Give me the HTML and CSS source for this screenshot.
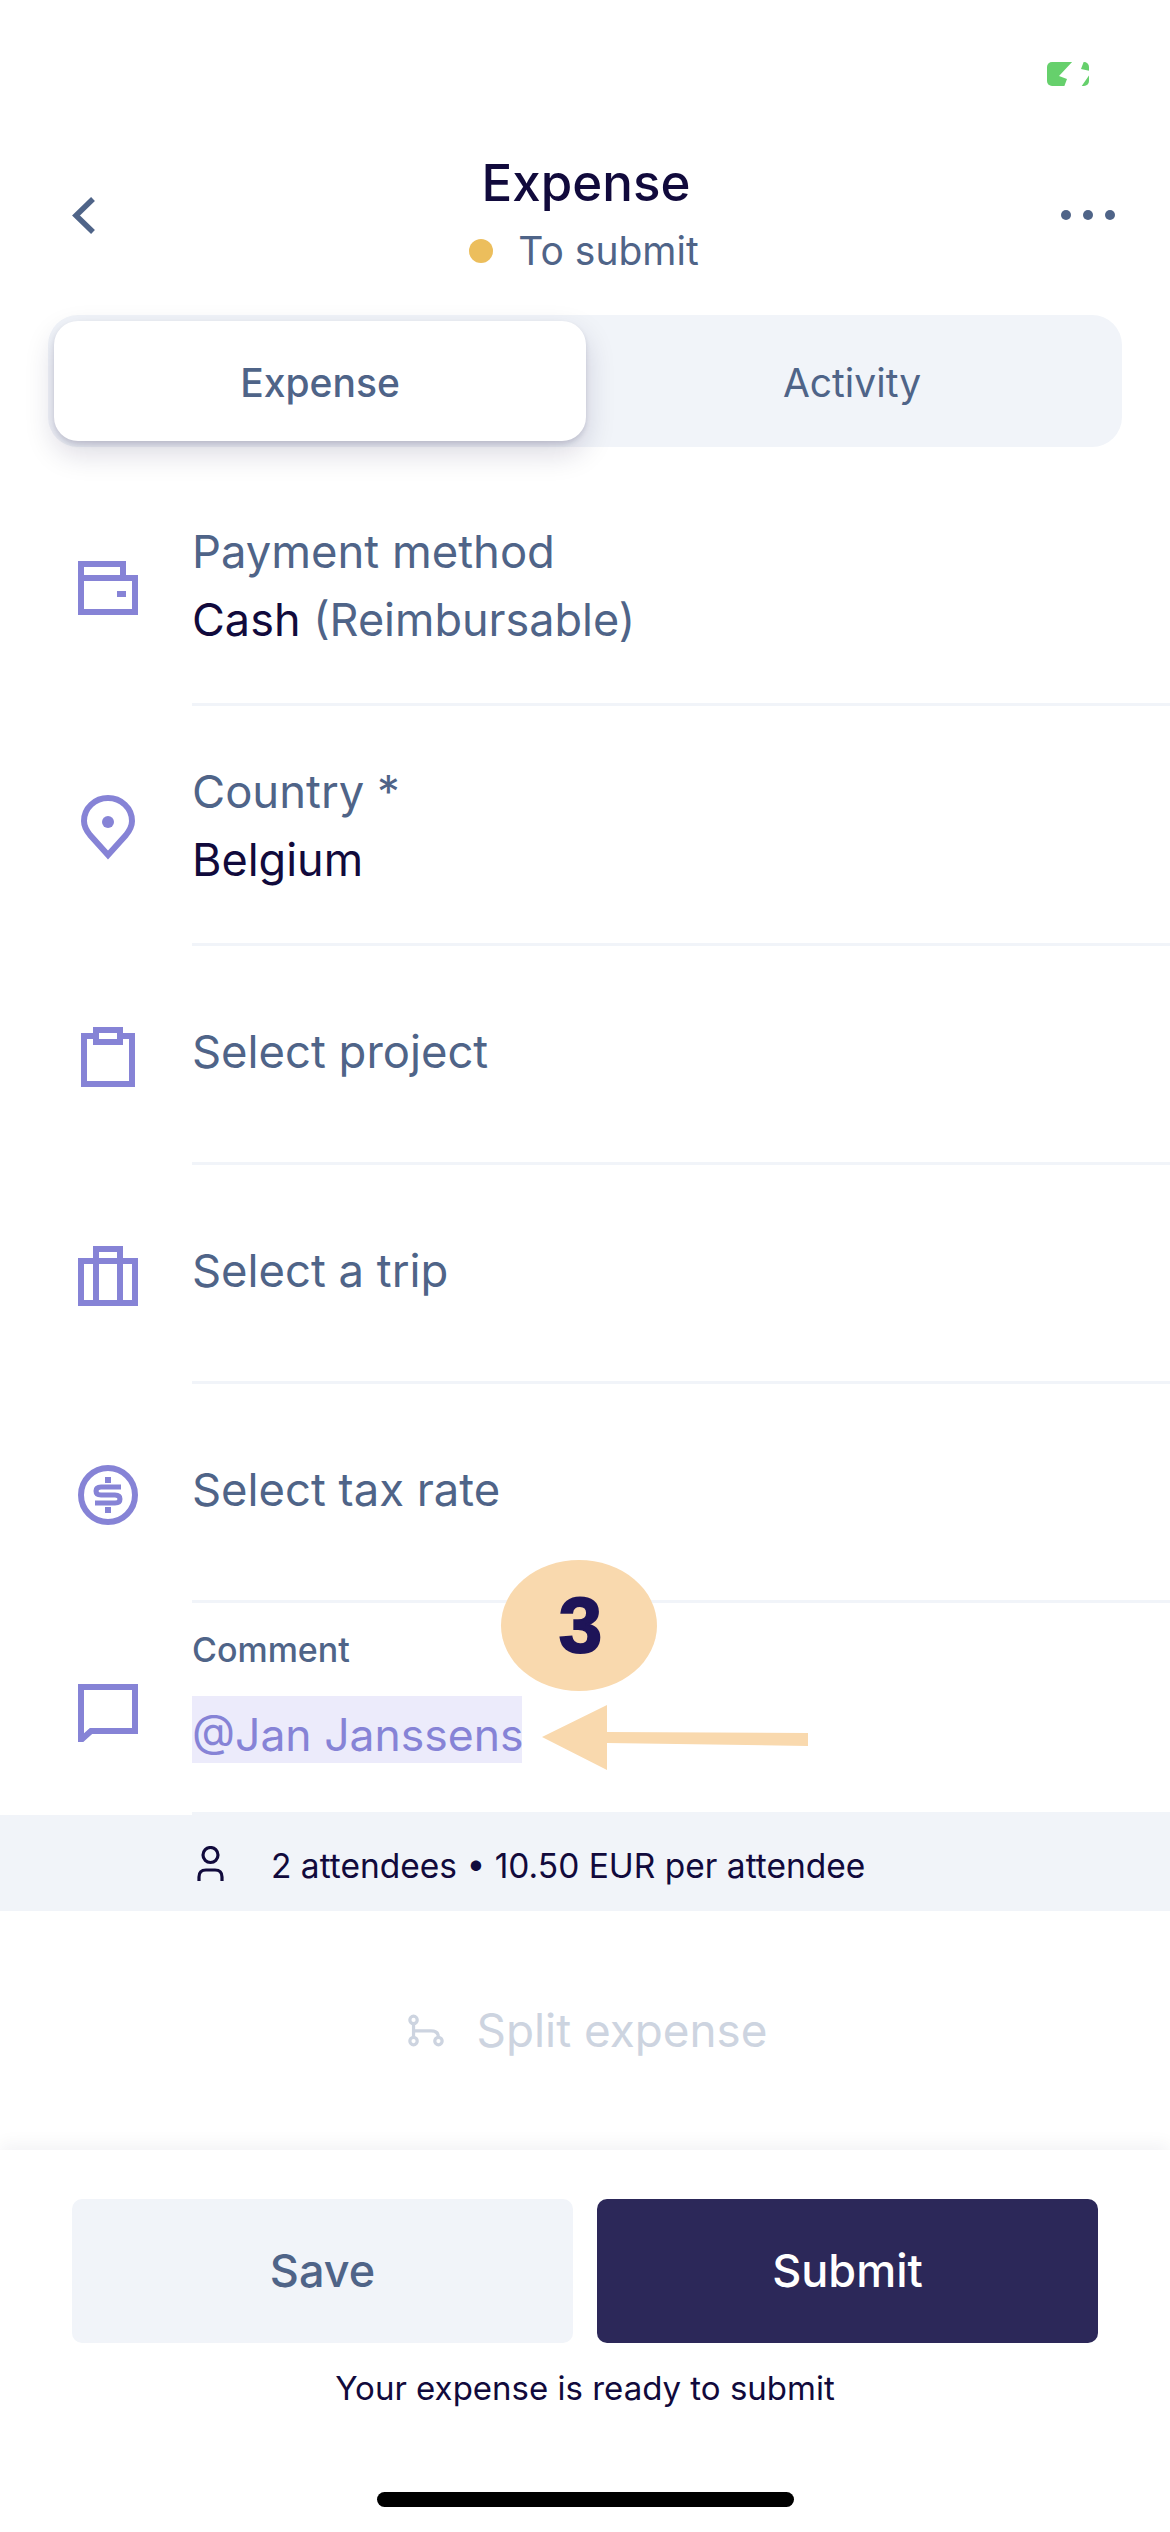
FILE: index.html
```html
<!DOCTYPE html>
<html lang="en">
<head>
<meta charset="utf-8">
<title>Expense</title>
<link rel="stylesheet" href="styles.css">
</head>
<body>
<div class="screen">
  <div class="status">
    <svg class="battery" viewBox="0 0 42 24"><rect width="42" height="24" rx="5" fill="#66D06C"/><polygon points="26,-1 12,14 20,17 17,25 34,25 43,12 43,9 34,7 37,-1" fill="#fff"/></svg>
  </div>
  <header class="nav">
    <svg class="back" viewBox="0 0 23 37"><path d="M21 2 L4 18.5 L21 35" fill="none" stroke="#4F6488" stroke-width="5.5"/></svg>
    <div class="nav-title">
      <div class="title">Expense</div>
      <div class="state"><span class="dot"></span><span>To submit</span></div>
    </div>
    <div class="more"><span></span><span></span><span></span></div>
  </header>
  <div class="tabs">
    <div class="tab tab-active">Expense</div>
    <div class="tab">Activity</div>
  </div>
  <div class="list">
    <div class="row row-tall">
      <div class="ico"><svg class="i60" viewBox="0 0 60 54" fill="none" stroke="#8683D6" stroke-width="6"><path d="M3 17V3H45V17M3 17H57V51H3Z"/><rect x="39" y="30" width="9" height="6" fill="#8683D6" stroke="none"/></svg></div>
      <div class="body"><div class="label">Payment method</div><div class="value">Cash <span class="muted">(Reimbursable)</span></div></div>
    </div>
    <div class="row row-tall">
      <div class="ico"><svg class="pin" viewBox="0 0 54 65" fill="none" stroke="#8683D6" stroke-width="6"><path d="M27 60 L9 40 C5 35 3 31 3 26 C3 13 14 3 27 3 C40 3 51 13 51 26 C51 31 49 35 45 40 Z"/><circle cx="27" cy="27" r="6" fill="#8683D6" stroke="none"/></svg></div>
      <div class="body"><div class="label">Country *</div><div class="value">Belgium</div></div>
    </div>
    <div class="row row-single">
      <div class="ico"><svg class="clip" viewBox="0 0 54 60" fill="none" stroke="#8683D6" stroke-width="6"><path d="M12 9H3V57H51V9H42"/><rect x="15" y="3" width="24" height="12"/></svg></div>
      <div class="body"><div class="label">Select project</div></div>
    </div>
    <div class="row row-single">
      <div class="ico"><svg class="i60" viewBox="0 0 60 60" fill="none" stroke="#8683D6" stroke-width="6"><rect x="3" y="15" width="54" height="42"/><path d="M18 57V3H42V57"/></svg></div>
      <div class="body"><div class="label">Select a trip</div></div>
    </div>
    <div class="row row-single">
      <div class="ico"><svg class="i60" viewBox="0 0 60 60" fill="none" stroke="#8683D6"><circle cx="30" cy="30" r="27" stroke-width="6"/><path d="M43 22H23Q18 22 18 26V26Q18 30 23 30H37Q42 30 42 34V34Q42 38 37 38H17" stroke-width="5"/><path d="M30 12V18M30 42V48" stroke-width="6"/></svg></div>
      <div class="body"><div class="label">Select tax rate</div></div>
    </div>
    <div class="row row-comment">
      <div class="ico"><svg class="i60" viewBox="0 0 60 58" fill="none" stroke="#8683D6" stroke-width="6"><path d="M3 3H57V47H13L3 56Z"/></svg></div>
      <div class="body"><div class="small">Comment</div><div class="mention">@Jan Janssens</div></div>
    </div>
  </div>
  <div class="attendees">
    <svg class="person" viewBox="0 0 27 35" fill="none" stroke="#110A3C" stroke-width="3.2"><circle cx="13.5" cy="9" r="7.5"/><path d="M2 35V31Q2 24 9 24H18Q25 24 25 31V35"/></svg>
    <span class="att-text">2 attendees • 10.50 EUR per attendee</span>
  </div>
  <div class="split">
    <svg class="branch" viewBox="0 0 39 35" fill="none" stroke="#CDD4E0" stroke-width="3.5"><circle cx="6" cy="6" r="4"/><circle cx="6" cy="29" r="4"/><circle cx="33" cy="29" r="4"/><path d="M6 10V25M6 18H25Q33 18 33 25"/></svg>
    <span>Split expense</span>
  </div>
  <footer class="footer">
    <div class="buttons">
      <div class="btn btn-save">Save</div>
      <div class="btn btn-submit">Submit</div>
    </div>
    <div class="hint">Your expense is ready to submit</div>
    <div class="home"></div>
  </footer>
  <div class="badge">3</div>
  <svg class="arrow" viewBox="0 0 270 66"><polygon points="0,32 65,0 65,27 266,28 266,41 65,38 65,65" fill="#F9D9AE"/></svg>
</div>
</body>
</html>
```
FILE: styles.css
```css
* { box-sizing: border-box; }
html, body { margin: 0; padding: 0; background: #fff; }
body { font-family: Inter, "Liberation Sans", sans-serif; }
.screen { position: relative; width: 1170px; height: 2532px; overflow: hidden; display: flex; flex-direction: column; background: #fff; color: #110A3C; }

.status { height: 152px; padding: 62px 81px 0 0; display: flex; justify-content: flex-end; align-items: flex-start; }
.battery { width: 42px; height: 24px; display: block; }

.nav { height: 163px; padding: 0 55px 0 72px; display: flex; align-items: flex-start; justify-content: space-between; }
.back { width: 23px; height: 37px; margin-top: 45px; }
.nav-title { display: flex; flex-direction: column; align-items: center; margin-left: 16px; }
.title { font-size: 51px; line-height: 62px; font-weight: 500; color: #110A3C; }
.state { margin-top: 12px; display: flex; align-items: center; gap: 25px; font-size: 39px; line-height: 50px; color: #4F6488; margin-left: -4px; }
.dot { width: 24px; height: 24px; border-radius: 50%; background: #ECBE5C; }
.more { display: flex; gap: 12px; margin-top: 58px; }
.more span { width: 10px; height: 10px; border-radius: 50%; background: #4F6488; }

.tabs { margin: 0 48px; height: 132px; padding: 6px; border-radius: 30px; background: #F1F4F9; display: flex; }
.tab { flex: 0 0 532px; display: flex; align-items: center; justify-content: center; font-size: 39px; color: #4F6488; padding-top: 2px; }
.tab-active { background: #fff; border-radius: 24px; box-shadow: 0 12px 30px rgba(17,10,60,.16), 0 3px 5px rgba(17,10,60,.12); font-weight: 500; }

.list { display: flex; flex-direction: column; margin-top: 19px; }
.row { display: flex; height: 219px; }
.row-tall { height: 240px; }
.row-comment { height: 212px; }
.ico { flex: 0 0 192px; display: flex; align-items: center; justify-content: center; padding-left: 24px; padding-top: 3px; }
.i60 { width: 60px; height: auto; display: block; }
.pin { width: 54px; height: 65px; display: block; }
.clip { width: 54px; height: 60px; display: block; }
.body { flex: 1; padding: 2px 0 0; border-bottom: 3px solid #F1F4F9; display: flex; flex-direction: column; justify-content: center; }
.row-single .body { padding: 0 0 5px; }
.label { font-size: 45.4px; line-height: 68px; color: #4F6488; }
.value { font-size: 45px; line-height: 68px; color: #110A3C; }
.muted { color: #4F6488; }
.row-comment .ico { padding-top: 7px; }
.row-comment .body { padding: 0; justify-content: flex-start; }
.small { margin-top: 27px; font-size: 34px; line-height: 40px; font-weight: 500; color: #4F6488; }
.mention { margin-top: 26px; width: 330px; height: 67px; line-height: 78px; font-size: 44.5px; color: #8683D6; background: #ECEBFB; white-space: nowrap; }

.attendees { height: 96px; background: #F1F4F9; padding-left: 197px; display: flex; align-items: center; font-size: 33.5px; color: #110A3C; gap: 47px; }
.att-text { padding-top: 6px; }
.person { width: 27px; height: 35px; display: block; }

.split { height: 239px; padding-top: 0; display: flex; align-items: center; justify-content: center; gap: 33px; font-size: 45.8px; color: #CDD4E0; padding-left: 5px; }
.branch { width: 36px; height: 35px; display: block; }

.footer { position: relative; flex: 1; background: #fff; box-shadow: 0 -6px 16px rgba(17,10,60,.05); padding: 49px 72px 0; display: flex; flex-direction: column; align-items: center; }
.buttons { display: flex; gap: 24px; width: 100%; }
.btn { flex: 1; height: 144px; border-radius: 10px; display: flex; align-items: center; justify-content: center; font-size: 45px; font-weight: 500; padding-bottom: 2px; }
.btn-save { background: #F1F4F9; color: #4F6488; }
.btn-submit { background: #2C2859; color: #fff; }
.hint { margin-top: 24px; font-size: 33px; line-height: 42px; color: #110A3C; }
.home { margin-top: 83px; width: 417px; height: 15px; border-radius: 8px; background: #000; }

.badge { position: absolute; left: 501px; top: 1560px; width: 156px; height: 131px; padding-left: 3px; border-radius: 50%; background: #F9D9AE; display: flex; align-items: center; justify-content: center; font-family: "Liberation Sans", Arial, sans-serif; font-size: 78px; font-weight: 700; -webkit-text-stroke: 2px #1E1458; color: #1E1458; }
.arrow { position: absolute; left: 542px; top: 1705px; width: 270px; height: 66px; }
```
